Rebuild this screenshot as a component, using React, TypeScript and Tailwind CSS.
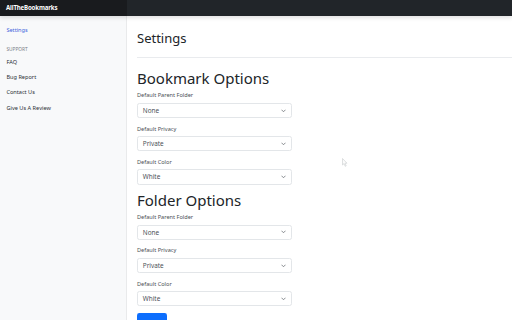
import React from "react";

const Chevron = () => (
  <svg width="5" height="4" viewBox="0 0 10 8" className="shrink-0">
    <polyline points="1.5,2 5,5.5 8.5,2" fill="none" stroke="#6b7075" strokeWidth="1.6" strokeLinecap="round" strokeLinejoin="round" />
  </svg>
);

const Field = ({ label, value }: { label: string; value: string }) => (
  <div className="mb-[6.4px]">
    <div className="text-[5.6px] leading-[8.4px] mb-[3.2px] text-[#4a4f55]">{label}</div>
    <div className="w-[155px] h-[15.2px] border border-[#e3e6e9] rounded-[2.4px] bg-white flex items-center justify-between pl-[4.8px] pr-[5.5px]">
      <span className="text-[6.4px] text-[#4b5056]">{value}</span>
      <Chevron />
    </div>
  </div>
);

const Section = ({ title }: { title: string }) => (
  <div>
    <h2 className="text-[15px] leading-[18px] font-normal text-[#212529] mb-[4.4px]">{title}</h2>
    <Field label="Default Parent Folder" value="None" />
    <Field label="Default Privacy" value="Private" />
    <Field label="Default Color" value="White" />
  </div>
);

export default function App() {
  return (
    <div
      className="w-[512px] h-[320px] overflow-hidden flex flex-col bg-white relative"
      style={{ fontFamily: '"Noto Sans", "Open Sans", sans-serif' }}
    >
      <header className="h-[16px] shrink-0 flex bg-[#212529] shadow-[0_2px_4px_rgba(0,0,0,0.12)] relative z-10">
        <div className="w-[127px] h-full bg-[#191b1e] px-[6px] flex items-center text-white text-[6.1px] font-bold tracking-[-0.15px]">
          AllTheBookmarks
        </div>
      </header>
      <div className="flex flex-1 min-h-0">
        <nav className="w-[127px] shrink-0 bg-[#f8f9fa] shadow-[inset_-1px_0_0_rgba(0,0,0,0.06)] pt-[6.4px]">
          <div className="px-[6.4px] py-[3.2px] leading-[8.4px] text-[5.6px] text-[#3f63dc]">Settings</div>
          <div className="px-[6.4px] mt-[9px] mb-[1px] leading-[7.5px] text-[4.8px] uppercase text-[#7a8087]">Support</div>
          {["FAQ", "Bug Report", "Contact Us", "Give Us A Review"].map((t) => (
            <div key={t} className="px-[6.4px] py-[3.4px] leading-[8.4px] text-[5.6px] text-[#2b3035]">
              {t}
            </div>
          ))}
        </nav>
        <main className="flex-1 pl-[10px]">
          <div className="pt-[14px] pb-[11px] border-b border-[#e9ebee] mb-[11px]">
            <h1 className="text-[13px] leading-[16px] font-normal text-[#212529]">Settings</h1>
          </div>
          <Section title="Bookmark Options" />
          <Section title="Folder Options" />
          <div className="w-[30px] h-[15px] rounded-[2.4px] bg-[#0d6efd]" />
        </main>
      </div>
      <svg className="absolute left-[342px] top-[158px]" width="6" height="9" viewBox="0 0 6 9">
        <path d="M0.5 0.5 L0.5 7 L2 5.6 L3.2 8.3 L4.2 7.9 L3 5.2 L5 5.2 Z" fill="#fbfbfb" stroke="#c9cccf" strokeWidth="0.6" />
      </svg>
    </div>
  );
}
